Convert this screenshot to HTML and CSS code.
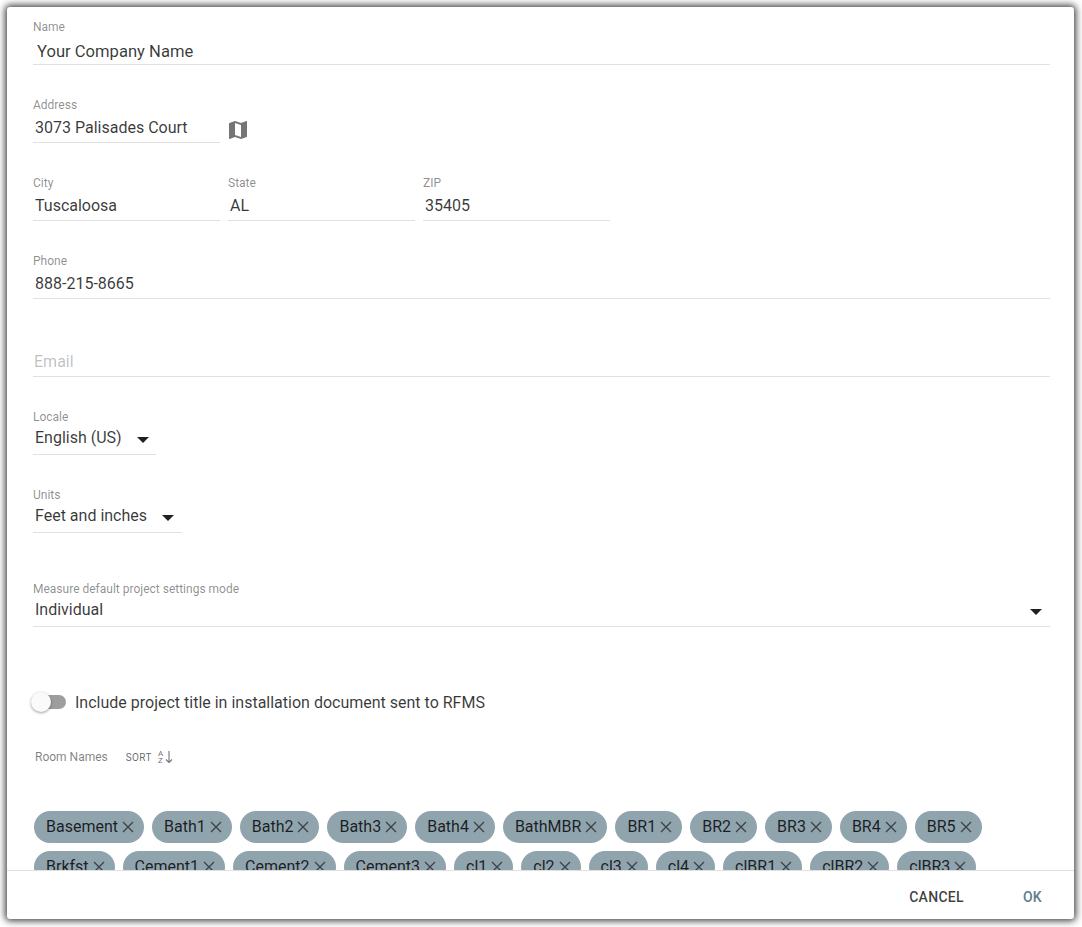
FILE: index.html
```html
<!DOCTYPE html>
<html lang="en">
<head>
<meta charset="utf-8">
<title>Company settings</title>
<link rel="stylesheet" href="styles.css">
</head>
<body>
<div class="dialog">
  <div class="content">
    <div class="field field-first">
      <div class="label">Name</div>
      <div class="value value-name">Your Company Name</div>
    </div>
    <div class="row">
      <div class="field field-third">
        <div class="label">Address</div>
        <div class="value">3073 Palisades Court</div>
      </div>
      <svg class="map-icon" viewBox="0 0 24 24" width="24" height="24"><path d="M20.5 3l-.16.03L15 5.1 9 3 3.36 4.9c-.21.07-.36.25-.36.48V20.5c0 .28.22.5.5.5l.16-.03L9 18.9l6 2.1 5.64-1.9c.21-.07.36-.25.36-.48V3.5c0-.28-.22-.5-.5-.5zM15 19l-6-2.11V5l6 2.11V19z"/></svg>
    </div>
    <div class="row row-gap">
      <div class="field field-third">
        <div class="label">City</div>
        <div class="value">Tuscaloosa</div>
      </div>
      <div class="field field-third">
        <div class="label">State</div>
        <div class="value">AL</div>
      </div>
      <div class="field field-third">
        <div class="label">ZIP</div>
        <div class="value">35405</div>
      </div>
    </div>
    <div class="field">
      <div class="label">Phone</div>
      <div class="value">888-215-8665</div>
    </div>
    <div class="field">
      <div class="label"></div>
      <div class="value value-placeholder">Email</div>
    </div>
    <div class="field field-locale">
      <div class="label">Locale</div>
      <div class="value value-select">English (US)<span class="caret"></span></div>
    </div>
    <div class="field field-units">
      <div class="label">Units</div>
      <div class="value value-select">Feet and inches<span class="caret"></span></div>
    </div>
    <div class="field field-measure">
      <div class="label">Measure default project settings mode</div>
      <div class="value value-select value-spread">Individual<span class="caret"></span></div>
    </div>
    <div class="toggle-row">
      <span class="toggle"><span class="track"></span><span class="thumb"></span></span>
      <span class="toggle-label">Include project title in installation document sent to RFMS</span>
    </div>
    <div class="rooms-head">
      <span class="rooms-label">Room Names</span>
      <span class="sort">SORT</span>
      <span class="sort-icon">
        <span class="az"><span>A</span><span>Z</span></span>
        <svg viewBox="0 0 8 14" width="8" height="14"><path d="M4 1v11.5M1 9.5l3 3 3-3" fill="none" stroke="#757575" stroke-width="1.1"/></svg>
      </span>
    </div>
    <div class="chips">
      <span class="chip">Basement<svg class="x" viewBox="0 0 12 12"><path d="M1 1l10 10M11 1L1 11"/></svg></span>
      <span class="chip">Bath1<svg class="x" viewBox="0 0 12 12"><path d="M1 1l10 10M11 1L1 11"/></svg></span>
      <span class="chip">Bath2<svg class="x" viewBox="0 0 12 12"><path d="M1 1l10 10M11 1L1 11"/></svg></span>
      <span class="chip">Bath3<svg class="x" viewBox="0 0 12 12"><path d="M1 1l10 10M11 1L1 11"/></svg></span>
      <span class="chip">Bath4<svg class="x" viewBox="0 0 12 12"><path d="M1 1l10 10M11 1L1 11"/></svg></span>
      <span class="chip">BathMBR<svg class="x" viewBox="0 0 12 12"><path d="M1 1l10 10M11 1L1 11"/></svg></span>
      <span class="chip">BR1<svg class="x" viewBox="0 0 12 12"><path d="M1 1l10 10M11 1L1 11"/></svg></span>
      <span class="chip">BR2<svg class="x" viewBox="0 0 12 12"><path d="M1 1l10 10M11 1L1 11"/></svg></span>
      <span class="chip">BR3<svg class="x" viewBox="0 0 12 12"><path d="M1 1l10 10M11 1L1 11"/></svg></span>
      <span class="chip">BR4<svg class="x" viewBox="0 0 12 12"><path d="M1 1l10 10M11 1L1 11"/></svg></span>
      <span class="chip">BR5<svg class="x" viewBox="0 0 12 12"><path d="M1 1l10 10M11 1L1 11"/></svg></span>
      <span class="chip">Brkfst<svg class="x" viewBox="0 0 12 12"><path d="M1 1l10 10M11 1L1 11"/></svg></span>
      <span class="chip">Cement1<svg class="x" viewBox="0 0 12 12"><path d="M1 1l10 10M11 1L1 11"/></svg></span>
      <span class="chip">Cement2<svg class="x" viewBox="0 0 12 12"><path d="M1 1l10 10M11 1L1 11"/></svg></span>
      <span class="chip">Cement3<svg class="x" viewBox="0 0 12 12"><path d="M1 1l10 10M11 1L1 11"/></svg></span>
      <span class="chip">cl1<svg class="x" viewBox="0 0 12 12"><path d="M1 1l10 10M11 1L1 11"/></svg></span>
      <span class="chip">cl2<svg class="x" viewBox="0 0 12 12"><path d="M1 1l10 10M11 1L1 11"/></svg></span>
      <span class="chip">cl3<svg class="x" viewBox="0 0 12 12"><path d="M1 1l10 10M11 1L1 11"/></svg></span>
      <span class="chip">cl4<svg class="x" viewBox="0 0 12 12"><path d="M1 1l10 10M11 1L1 11"/></svg></span>
      <span class="chip">clBR1<svg class="x" viewBox="0 0 12 12"><path d="M1 1l10 10M11 1L1 11"/></svg></span>
      <span class="chip">clBR2<svg class="x" viewBox="0 0 12 12"><path d="M1 1l10 10M11 1L1 11"/></svg></span>
      <span class="chip">clBR3<svg class="x" viewBox="0 0 12 12"><path d="M1 1l10 10M11 1L1 11"/></svg></span>
    </div>
  </div>
  <div class="footer">
    <span class="btn btn-cancel">CANCEL</span>
    <span class="btn btn-ok">OK</span>
  </div>
</div>
</body>
</html>
```
FILE: styles.css
```css
* { box-sizing: border-box; }
html, body { height: 100%; }
body {
  margin: 0;
  padding: 7px 8px 8px 7px;
  background: #fff;
  font-family: Roboto, "Liberation Sans", sans-serif;
  color: rgba(0, 0, 0, .78);
  overflow: hidden;
}
.dialog {
  width: 1067px;
  height: 912px;
  background: #fff;
  border-radius: 3px;
  box-shadow: 0 0 7px 2px rgba(0, 0, 0, .75);
  display: flex;
  flex-direction: column;
  overflow: hidden;
}
.content {
  height: 863px;
  flex: none;
  overflow: hidden;
  padding: 13px 24px 0 26px;
}
.field { margin-bottom: 33px; display: block; }
.label {
  height: 14px;
  font-size: 12px;
  line-height: 14px;
  color: rgba(0, 0, 0, .46);
}
.value {
  height: 31px;
  padding: 0 2px;
  font-size: 16px;
  line-height: 32px;
  border-bottom: 1px solid #e0e0e0;
}
.value-name { padding: 3px 4px 0; font-size: 16.6px; line-height: 30px; }
.value-placeholder { color: rgba(0, 0, 0, .26); padding-left: 1px; }
.value-select { display: flex; align-items: center; padding-bottom: 2px; }
.value-spread { justify-content: space-between; padding-right: 8px; }
.row { display: flex; }
.row-gap { gap: 8px; }
.field-third { width: 187px; }
.map-icon { margin: 20px 0 0 6px; fill: #757575; flex: none; }
.caret {
  width: 0;
  height: 0;
  margin: 4px 0 0 15px;
  border-left: 6px solid transparent;
  border-right: 6px solid transparent;
  border-top: 6px solid #212121;
  flex: none;
}
.field-locale { width: 123px; }
.field-units { width: 149px; margin-bottom: 49px; }
.field-measure { margin-bottom: 0; }
.toggle-row {
  display: flex;
  align-items: center;
  height: 24px;
  margin-top: 63px;
}
.toggle { position: relative; display: block; width: 34px; height: 20px; flex: none; margin-left: -1px; }
.track {
  position: absolute;
  left: 0;
  top: 3px;
  width: 34px;
  height: 14px;
  border-radius: 7px;
  background: #9e9e9e;
}
.thumb {
  position: absolute;
  left: -1px;
  top: 0;
  width: 20px;
  height: 20px;
  border-radius: 50%;
  background: #fafafa;
  box-shadow: 0 1px 3px rgba(0, 0, 0, .4);
}
.toggle-label { margin-left: 9px; font-size: 16px; }
.rooms-head {
  display: flex;
  align-items: center;
  height: 20px;
  margin-top: 33px;
  padding-left: 2px;
  color: rgba(0, 0, 0, .5);
}
.rooms-label { font-size: 12px; }
.sort { font-size: 10px; letter-spacing: .4px; margin-left: 18px; color: rgba(0, 0, 0, .62); }
.sort-icon { display: flex; align-items: center; margin-left: 6px; }
.az {
  display: flex;
  flex-direction: column;
  font-size: 8px;
  line-height: 7px;
  width: 7px;
  color: rgba(0, 0, 0, .62);
}
.chips {
  display: flex;
  flex-wrap: wrap;
  gap: 8px 8px;
  margin-top: 44px;
  padding-left: 1px;
}
.chip {
  display: inline-flex;
  align-items: center;
  height: 32px;
  padding: 0 10px 2px 12px;
  border-radius: 16px;
  background: #90a4ae;
  font-size: 16px;
  color: rgba(0, 0, 0, .82);
}
.x {
  width: 12px;
  height: 12px;
  margin: 2px 0 0 4px;
  fill: none;
  stroke: rgba(0, 0, 0, .6);
  stroke-width: 1.3;
  flex: none;
}
.footer {
  flex: 1;
  border-top: 1px solid #e0e0e0;
  display: flex;
  align-items: center;
  justify-content: flex-end;
  padding: 3px 32px 0 0;
}
.btn { font-size: 14px; font-weight: 500; letter-spacing: .3px; }
.btn-cancel { color: rgba(0, 0, 0, .76); margin-right: 59px; }
.btn-ok { color: #607d8b; }
```
